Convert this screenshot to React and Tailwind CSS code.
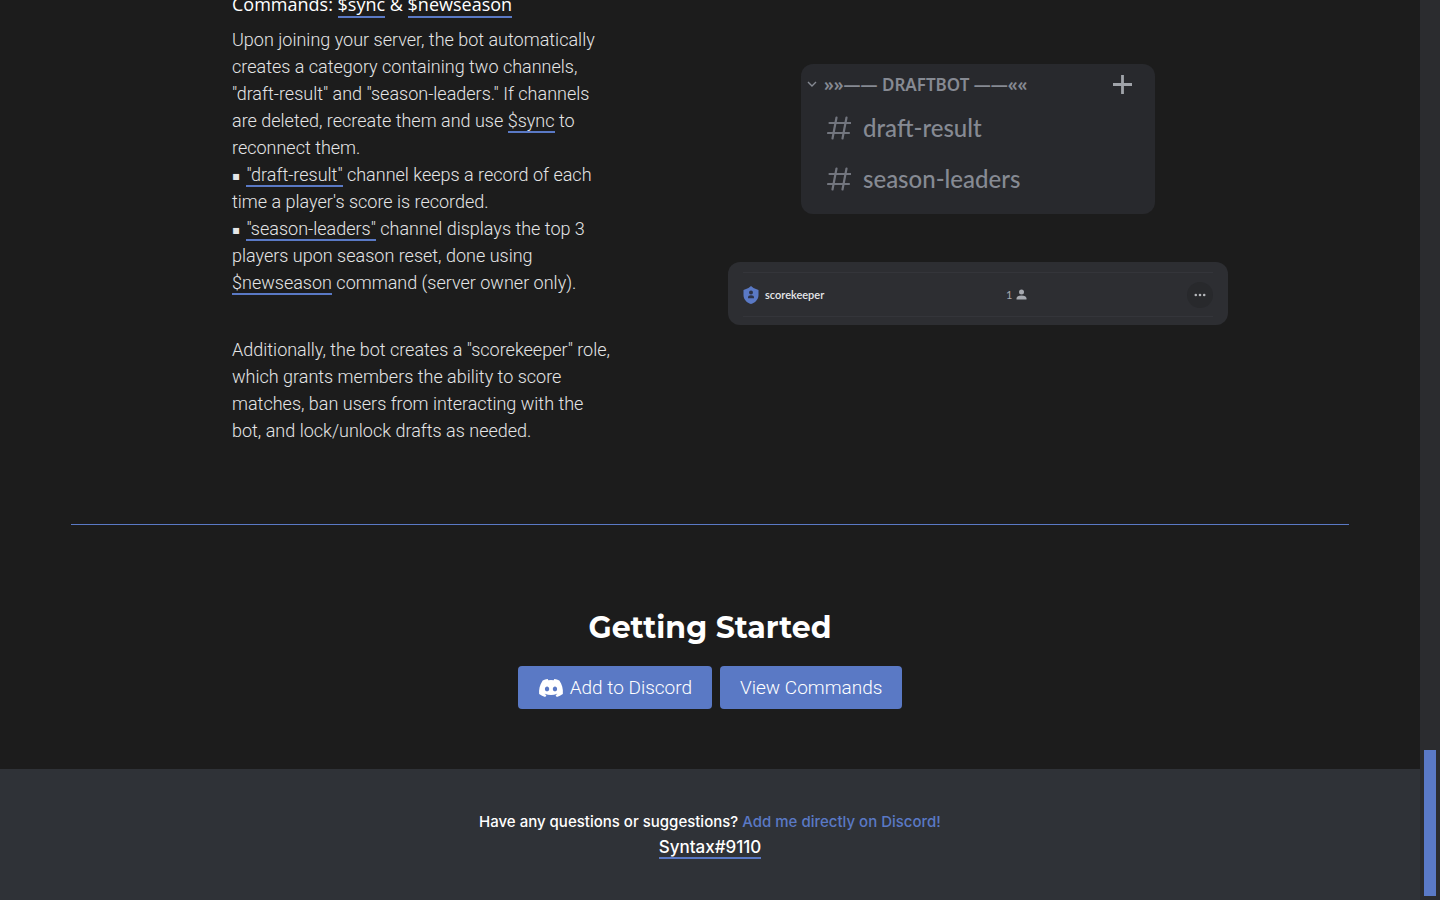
import { FaDiscord } from "react-icons/fa";

function Mark({ children }) {
  return <span className="border-b-2 border-[#5a79c5]">{children}</span>;
}

function Bullet() {
  return (
    <span className="inline-block w-[10px] align-middle font-['DejaVu_Sans'] text-xs leading-none font-normal">
      ▪
    </span>
  );
}

function Channel({ name }) {
  return (
    <li className="flex h-[51px] items-center gap-3 pl-[26px] font-['Lato'] text-2xl font-medium">
      <svg className="size-6" viewBox="0 0 24 24" fill="none" stroke="#72757e" strokeWidth="2.2" strokeLinecap="round" aria-hidden="true">
        <path d="M2.500 7h21M1 17h21M9.500 1.500 5.500 22.500M19.500 1.500 15.500 22.500" />
      </svg>
      <a href="#channel">{name}</a>
    </li>
  );
}

function ChannelCard() {
  return (
    <div className="h-[150px] w-[354px] rounded-xl bg-[#28292d] text-[#868a93]">
      <div className="flex h-[38px] items-center pt-[2px] pr-[23px] pl-[6px]">
        <svg className="mr-[7px] size-[10px]" viewBox="0 0 10 10" fill="none" stroke="currentColor" strokeWidth="1.4" aria-hidden="true">
          <path d="M1 3l4 4 4-4" />
        </svg>
        <h4 className="font-['Noto_Sans'] text-[17px] font-semibold">»»—— DRAFTBOT ——««</h4>
        <button type="button" aria-label="Create channel" className="ml-auto">
          <svg className="size-[19px]" viewBox="0 0 19 19" fill="none" stroke="#a0a3a9" strokeWidth="2.800" aria-hidden="true">
            <path d="M9.500 0v19M0 9.500h19" />
          </svg>
        </button>
      </div>
      <ul>
        <Channel name="draft-result" />
        <Channel name="season-leaders" />
      </ul>
    </div>
  );
}

function RoleCard() {
  return (
    <div className="w-full rounded-xl bg-[#2d2e32] px-[15px] pt-[10px] pb-2">
      <div className="flex h-[45px] items-center border-y border-[#34353a] font-['Lato'] text-[11px]">
        <div className="flex flex-1 items-center gap-[6px]">
          <svg className="h-[18px] w-4" viewBox="0 0 16 18" aria-hidden="true">
            <path fill="#5a79c5" d="M8 0 10.500 2 15.500 4V9C15.500 13.500 12 17 8 18 4 17 .5 13.500.5 9V4L5.500 2Z" />
            <circle cx="8" cy="6.500" r="2" fill="#2d3347" />
            <path fill="#2d3347" d="M5 12.200V11.500C5 10 6 9.300 8 9.300S11 10 11 11.500V12.200Z" />
          </svg>
          <span className="font-semibold text-[#e6e7e9]">scorekeeper</span>
        </div>
        <div className="flex flex-1 items-center gap-1 pl-[82px] text-[#a6a9b0]">
          <span>1</span>
          <svg className="size-[11px]" viewBox="0 0 11 11" fill="currentColor" aria-hidden="true">
            <circle cx="5.500" cy="3" r="2.500" />
            <path d="M0.500 10.500V9.500C.5 7.500 2.500 6.400 5.500 6.400S10.500 7.500 10.500 9.500V10.500Z" />
          </svg>
        </div>
        <button type="button" aria-label="Role options" className="flex size-[26px] items-center justify-center rounded-full bg-[#28292c]">
          <svg className="h-1 w-3" viewBox="0 0 12 4" fill="#b4b6ba" aria-hidden="true">
            <circle cx="1.800" cy="2" r="1.300" />
            <circle cx="6" cy="2" r="1.300" />
            <circle cx="10.200" cy="2" r="1.300" />
          </svg>
        </button>
      </div>
    </div>
  );
}

export default function App() {
  return (
    <div className="flex min-h-screen overflow-hidden bg-[#1c1c1c] font-['Roboto',sans-serif] text-lg leading-[27px] text-[#e4e5e6]">
      <div className="flex min-w-0 flex-1 flex-col">
        <main>
          <section className="mx-auto flex max-w-[1036px] justify-between pb-20">
            <div className="-mt-[9px] w-[422px] pl-10 font-light">
              <h3 className="mb-2 font-['Open_Sans'] font-medium text-white">
                Commands: <Mark>$sync</Mark> &amp; <Mark>$newseason</Mark>
              </h3>
              <p>
                Upon joining your server, the bot automatically creates a category containing two
                channels, "draft-result" and "season-leaders." If channels are deleted, recreate
                them and use <Mark>$sync</Mark> to reconnect them.
                <br />
                <Bullet /> <Mark>"draft-result"</Mark> channel keeps a record of each time a
                player's score is recorded.
                <br />
                <Bullet /> <Mark>"season-leaders"</Mark> channel displays the top 3 players upon
                season reset, done using <Mark>$newseason</Mark> command (server owner only).
              </p>
              <p className="mt-10">
                Additionally, the bot creates a "scorekeeper" role, which grants members the ability
                to score matches, ban users from interacting with the bot, and lock/unlock drafts as
                needed.
              </p>
            </div>
            <div className="flex w-[500px] flex-col items-center gap-12 pt-16">
              <ChannelCard />
              <RoleCard />
            </div>
          </section>
          <hr className="mx-[5%] border-[#5a79c5]" />
          <section className="flex flex-col items-center pt-[83px] pb-[60px]">
            <h2 className="mb-[18px] font-['Montserrat','Open_Sans',sans-serif] text-[30px] leading-10 font-bold text-white">
              Getting Started
            </h2>
            <div className="flex gap-2 text-[19px] font-light text-white">
              <a href="#discord" className="flex h-[43px] items-center gap-[6px] rounded bg-[#5a79c5] px-5">
                <FaDiscord className="size-[26px]" aria-hidden="true" />
                Add to Discord
              </a>
              <a href="#commands" className="flex h-[43px] items-center rounded bg-[#5a79c5] px-5">
                View Commands
              </a>
            </div>
          </section>
        </main>
        <footer className="flex flex-1 flex-col items-center bg-[#2f3237] pt-10 font-['Inter',sans-serif] font-medium text-white">
          <p className="text-[15px] leading-[26px]">
            Have any questions or suggestions?{" "}
            <a href="#contact" className="text-[#5a79c5]">Add me directly on Discord!</a>
          </p>
          <p className="text-[17px] leading-6">
            <Mark>Syntax#9110</Mark>
          </p>
        </footer>
      </div>
      <div className="flex w-5 flex-col justify-end bg-[#2b2c2f] p-1" aria-hidden="true">
        <div className="h-[146px] bg-[#5a79c5]" />
      </div>
    </div>
  );
}
